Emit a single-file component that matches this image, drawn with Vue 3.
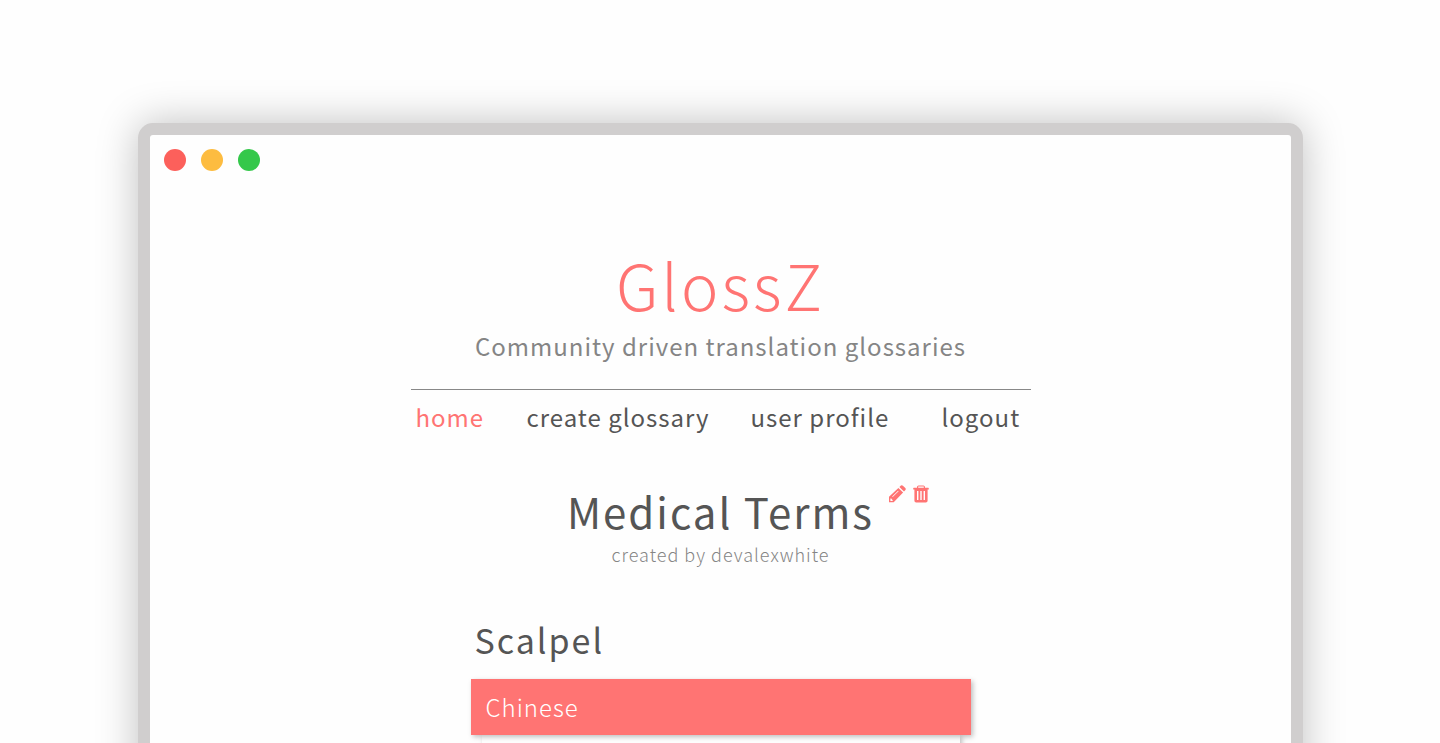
<script setup>
const links = [
  { label: 'home', active: true },
  { label: 'create glossary', active: false },
  { label: 'user profile', active: false },
  { label: 'logout', active: false },
]
</script>

<template>
  <div class="page">
    <div class="window">
      <div class="lights">
        <button class="light close" aria-label="Close"></button>
        <button class="light minimise" aria-label="Minimise"></button>
        <button class="light expand" aria-label="Expand"></button>
      </div>

      <div class="content">
        <header class="header">
          <h1 class="brand">GlossZ</h1>
          <p class="tagline">Community driven translation glossaries</p>
        </header>

        <nav class="nav">
          <a
            v-for="link in links"
            :key="link.label"
            href="#"
            class="link"
            :class="{ active: link.active }"
          >{{ link.label }}</a>
        </nav>

        <main>
          <div class="heading">
            <h2 class="title">
              Medical Terms
              <span class="actions">
                <button class="action" aria-label="Edit glossary">
                  <svg viewBox="0 0 18 18" width="18" height="18">
                    <path
                      fill="currentColor"
                      fill-rule="evenodd"
                      d="M1 11.8 10.4 2.9 15.1 7.6 5.7 17.2H1ZM2.4 13.8V15.9H4.4L4.9 15.4 3 13.3ZM4.2 11.5 4.7 12 10.6 6.3 10.1 5.8ZM11.4 2 12.9 0.6Q13.9 -0.2 14.9 0.7L17.3 3.1Q18.2 4 17.4 5L16 6.6Z"
                    />
                  </svg>
                </button>
                <button class="action" aria-label="Delete glossary">
                  <svg viewBox="0 0 16 18" width="16" height="18">
                    <path
                      fill="currentColor"
                      fill-rule="evenodd"
                      d="M0.8 2.8H4V2Q4 0.4 5.6 0.4H10.4Q12 0.4 12 2V2.8H15.2Q15.8 2.8 15.8 3.4V4.6H14.6V15.8Q14.6 17.6 12.8 17.6H3.2Q1.4 17.6 1.4 15.8V4.6H0.2V3.4Q0.2 2.8 0.8 2.8ZM5.2 2.8H10.8V1.6H5.2ZM4 6V15H5.4V6ZM7.3 6V15H8.7V6ZM10.6 6V15H12V6Z"
                    />
                  </svg>
                </button>
              </span>
            </h2>
            <p class="author">created by devalexwhite</p>
          </div>

          <section class="term">
            <h3 class="word">Scalpel</h3>
            <div class="language">Chinese</div>
            <div class="translations"></div>
          </section>
        </main>
      </div>
    </div>
  </div>
</template>

<style>
body {
  background: #fefefe;
}
</style>

<style scoped>
.page {
  box-sizing: border-box;
  height: 100vh;
  overflow: hidden;
  padding: 123px 137px 0 138px;
  font-family: 'Noto Sans CJK SC', 'Noto Sans', sans-serif;
  font-size: 24px;
  letter-spacing: 1px;
  color: #555;
}

.window {
  box-sizing: border-box;
  min-height: 100vh;
  border: 12px solid #d0cece;
  border-radius: 15px;
  background: #fefefe;
  box-shadow: 0 0 40px rgba(0, 0, 0, 0.25);
}

.lights {
  display: flex;
  gap: 15px;
  padding: 14px;
}

.light {
  width: 22px;
  height: 22px;
  padding: 0;
  border: 0;
  border-radius: 50%;
}

.close {
  background: #fc605b;
}

.minimise {
  background: #fdbc40;
}

.expand {
  background: #34c84a;
}

.content {
  max-width: 620px;
  margin: 0 auto;
  padding-top: 53px;
}

h1,
h2,
h3,
p {
  margin: 0;
}

.header {
  padding-bottom: 27px;
  border-bottom: 1px solid #888;
  text-align: center;
}

.brand {
  font-size: 63px;
  line-height: 92px;
  font-weight: 300;
  letter-spacing: 3px;
  color: #ff7473;
}

.tagline {
  line-height: 32px;
  color: #858585;
}

.nav {
  display: grid;
  grid-template-columns: 111fr 224fr 191fr 89fr;
  padding: 9px 0 0 5px;
}

.link {
  line-height: 36px;
  color: #555;
  text-decoration: none;
  white-space: nowrap;
}

.active {
  color: #ff7473;
}

.heading {
  padding-top: 46px;
  text-align: center;
}

.title {
  position: relative;
  width: max-content;
  margin: 0 auto;
  font-size: 42px;
  line-height: 60px;
  font-weight: 400;
  letter-spacing: 2px;
}

.actions {
  position: absolute;
  top: 4px;
  left: 100%;
  display: flex;
  gap: 7px;
  margin-left: 14px;
}

.action {
  padding: 0;
  border: 0;
  background: none;
  color: #ff7473;
  line-height: 0;
}

.author {
  padding-top: 1px;
  font-size: 18px;
  line-height: 24px;
  font-weight: 300;
  color: #858585;
}

.term {
  max-width: 500px;
  margin: 0 auto;
  padding-top: 47px;
}

.word {
  padding-left: 4px;
  font-size: 34px;
  line-height: 54px;
  font-weight: 400;
  letter-spacing: 2px;
}

.language {
  position: relative;
  margin-top: 12px;
  padding: 10px 15px;
  background: #ff7473;
  color: #fff;
  line-height: 36px;
  font-weight: 300;
  box-shadow: 2px 2px 5px rgba(0, 0, 0, 0.25);
}

.translations {
  height: 60px;
  margin: 0 11px;
  background: #fefefe;
  box-shadow: 2px 2px 5px rgba(0, 0, 0, 0.25);
}
</style>
